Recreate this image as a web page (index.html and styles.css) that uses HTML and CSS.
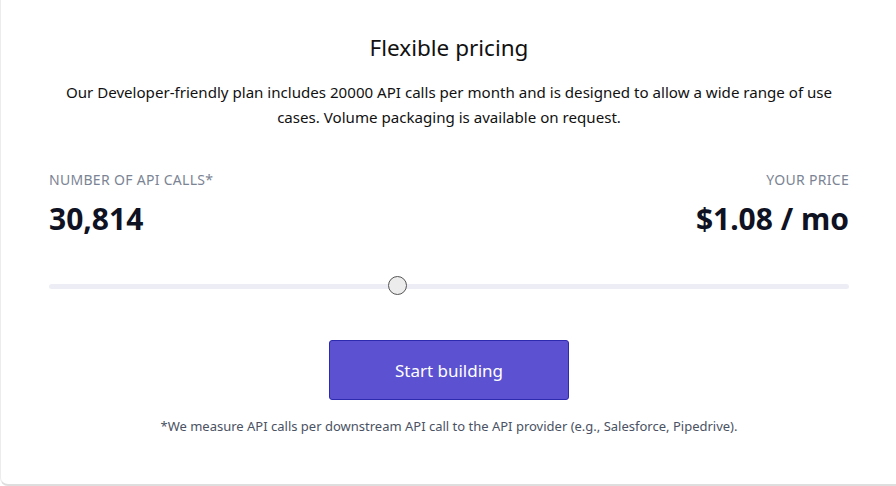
FILE: index.html
```html
<!DOCTYPE html>
<html>
<head>
<meta charset="utf-8">
<link rel="stylesheet" href="styles.css">
</head>
<body>
<div class="card">
  <div class="inner">
    <h1 class="title">Flexible pricing</h1>
    <p class="desc">Our Developer-friendly plan includes 20000 API calls per month and is designed to allow a wide range of use cases. Volume packaging is available on request.</p>
    <div class="stats">
      <div class="stat">
        <div class="label">Number of API calls*</div>
        <div class="value">30,814</div>
      </div>
      <div class="stat right">
        <div class="label">Your price</div>
        <div class="value">$1.08 / mo</div>
      </div>
    </div>
    <div class="slider">
      <div class="track"></div>
      <div class="thumb" style="left: 43.6%"></div>
    </div>
    <div class="actions">
      <button class="btn">Start building</button>
    </div>
    <p class="note">*We measure API calls per downstream API call to the API provider (e.g., Salesforce, Pipedrive).</p>
  </div>
</div>
</body>
</html>
```
FILE: styles.css
```css
html, body {
  margin: 0;
  padding: 0;
  background: #ffffff;
}
body {
  font-family: "Noto Sans", "Open Sans", sans-serif;
  color: #1a1a1a;
}
.card {
  box-sizing: border-box;
  width: 900px;
  height: 486px;
  border-left: 1px solid #ececec;
  border-bottom: 2px solid #dedede;
  border-bottom-left-radius: 8px;
  background: #fff;
  padding-top: 30px;
}
.inner {
  width: 800px;
  margin-left: 48px;
}
.title {
  margin: 0;
  text-align: center;
  font-size: 22.5px;
  font-weight: 400;
  line-height: 36px;
  color: #111;
}
.desc {
  margin: 14px auto 0;
  width: 800px;
  text-align: center;
  font-size: 15.1px;
  line-height: 25px;
  color: #111;
}
.stats {
  display: flex;
  justify-content: space-between;
  margin-top: 41px;
}
.stat.right {
  text-align: right;
}
.label {
  font-size: 14px;
  text-transform: uppercase;
  color: #7b8494;
  letter-spacing: 0.3px;
  line-height: 18px;
}
.value {
  margin-top: 10px;
  font-size: 30px;
  font-weight: 700;
  color: #0f1222;
  line-height: 40px;
}
.slider {
  position: relative;
  margin-top: 37px;
  height: 20px;
}
.track {
  position: absolute;
  left: 0;
  right: 0;
  top: 8px;
  height: 5px;
  border-radius: 3px;
  background: #ededf5;
}
.thumb {
  position: absolute;
  top: 0;
  width: 17px;
  height: 17px;
  margin-left: -10px;
  border-radius: 50%;
  background: #ececec;
  border: 1px solid #555;
}
.actions {
  display: flex;
  justify-content: center;
  margin-top: 44px;
}
.btn {
  width: 240px;
  height: 60px;
  background: #5b51d1;
  border: 1px solid #2e2ab0;
  border-radius: 3px;
  color: #fff;
  font-family: "Noto Sans", "Open Sans", sans-serif;
  font-size: 17px;
  cursor: pointer;
}
.note {
  margin: 17px 0 0;
  text-align: center;
  font-size: 13px;
  color: #4a5263;
  line-height: 18px;
}
```
